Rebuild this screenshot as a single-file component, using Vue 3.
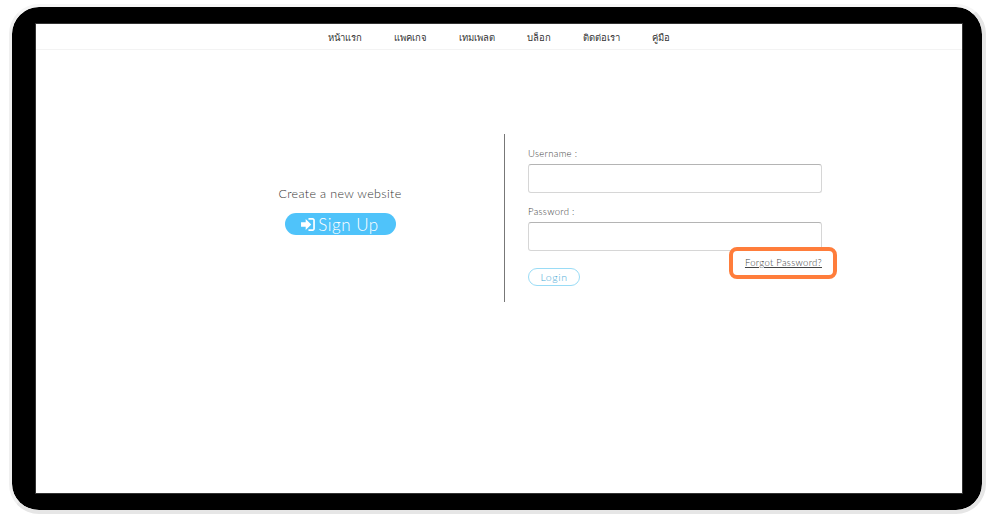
<template>
  <div class="shot">
    <div class="frame">
      <div class="page">
        <nav class="nav">
          <a v-for="n in links" :key="n">{{ n }}</a>
        </nav>
        <main class="main">
          <section class="left">
            <p class="new">Create a new website</p>
            <button class="signup">
              <svg width="14" height="13" viewBox="0 0 15 14"><path d="M0 4.500h5V1l6 6-6 6V9.500H0z" fill="#fff"/><path d="M8 1h4.500A1.500 1.500 0 0 1 14 2.500v9a1.500 1.500 0 0 1-1.500 1.500H8" fill="none" stroke="#fff" stroke-width="1.800"/></svg>
              Sign Up
            </button>
          </section>
          <form class="right" @submit.prevent>
            <label>Username :</label>
            <input type="text" />
            <label class="second">Password :</label>
            <input type="password" />
            <div class="foot">
              <button class="login">Login</button>
              <span class="forgot">
                <a>Forgot Password?</a>
                <i class="mark"></i>
              </span>
            </div>
          </form>
        </main>
      </div>
    </div>
  </div>
</template>

<script setup>
const links = ['หน้าแรก', 'แพคเกจ', 'เทมเพลต', 'บล็อก', 'ติดต่อเรา', 'คู่มือ']
</script>

<style>
html, body { margin: 0; background: #fff; }
</style>

<style scoped>
.shot { width: 990px; height: 517px; box-sizing: border-box; padding: 4px 0 0 9px; font-family: Lato, "Noto Sans", sans-serif; overflow: hidden; }
.frame { width: 977px; height: 510px; box-sizing: border-box; background: #000; border: 3px solid #e6e6e6; border-width: 3px 4px 4px 3px; border-top-color: #f6f6f6; border-left-color: #f0f0f0; border-radius: 30px; background-clip: padding-box; padding: 17px 20px 13px 24px; }
.page { width: 926px; height: 469px; background: #fff; display: flex; flex-direction: column; box-shadow: 0 0 0 1px #333; }
.nav { height: 26px; box-sizing: border-box; padding-top: 2px; border-bottom: 1px solid #f3f3f3; display: flex; justify-content: center; align-items: center; gap: 32px; font-size: 9.500px; font-weight: 300; color: #333; }
.main { display: grid; grid-template-columns: 328px 318px; margin: 84px 0 0 140px; }
.left { display: flex; flex-direction: column; align-items: center; justify-content: center; padding-bottom: 15px; }
.new { margin: 0 0 12px; font-size: 12.500px; font-weight: 300; letter-spacing: .35px; color: #333; }
.signup { width: 111px; height: 22px; padding: 0; border: 0; border-radius: 11px; background: #4fc3fa; color: #fff; font: 300 17px Lato, sans-serif; letter-spacing: .5px; display: flex; align-items: center; justify-content: center; gap: 3px; }
.right { height: 168px; box-sizing: border-box; border-left: 1px solid #777; padding: 14px 0 0 23px; display: flex; flex-direction: column; align-items: flex-start; }
label { font-size: 9.500px; font-weight: 300; line-height: 12px; color: #444; letter-spacing: .3px; margin-bottom: 4px; }
.second { margin-top: 13px; }
input { width: 294px; height: 29px; box-sizing: border-box; padding: 0 8px; border: 1px solid #d6d6d6; border-top-color: #b4b4b4; border-radius: 3px; background: #fff; }
.foot { width: 294px; display: flex; justify-content: space-between; align-items: flex-start; }
.login { margin-top: 17px; width: 52px; height: 18px; padding: 0 0 1px; border: 1px solid #9adcf6; border-radius: 9px; background: #fff; color: #4aaad6; font: 300 10.500px Lato, sans-serif; letter-spacing: .6px; }
.forgot { position: relative; margin-top: 6px; font-size: 9.500px; font-weight: 300; line-height: 12px; color: #444; letter-spacing: .3px; }
.forgot a { text-decoration: underline; }
.mark { position: absolute; left: -16px; right: -15px; top: -10px; bottom: -10px; border: 4px solid #ff7d3b; border-radius: 8px; }
</style>
